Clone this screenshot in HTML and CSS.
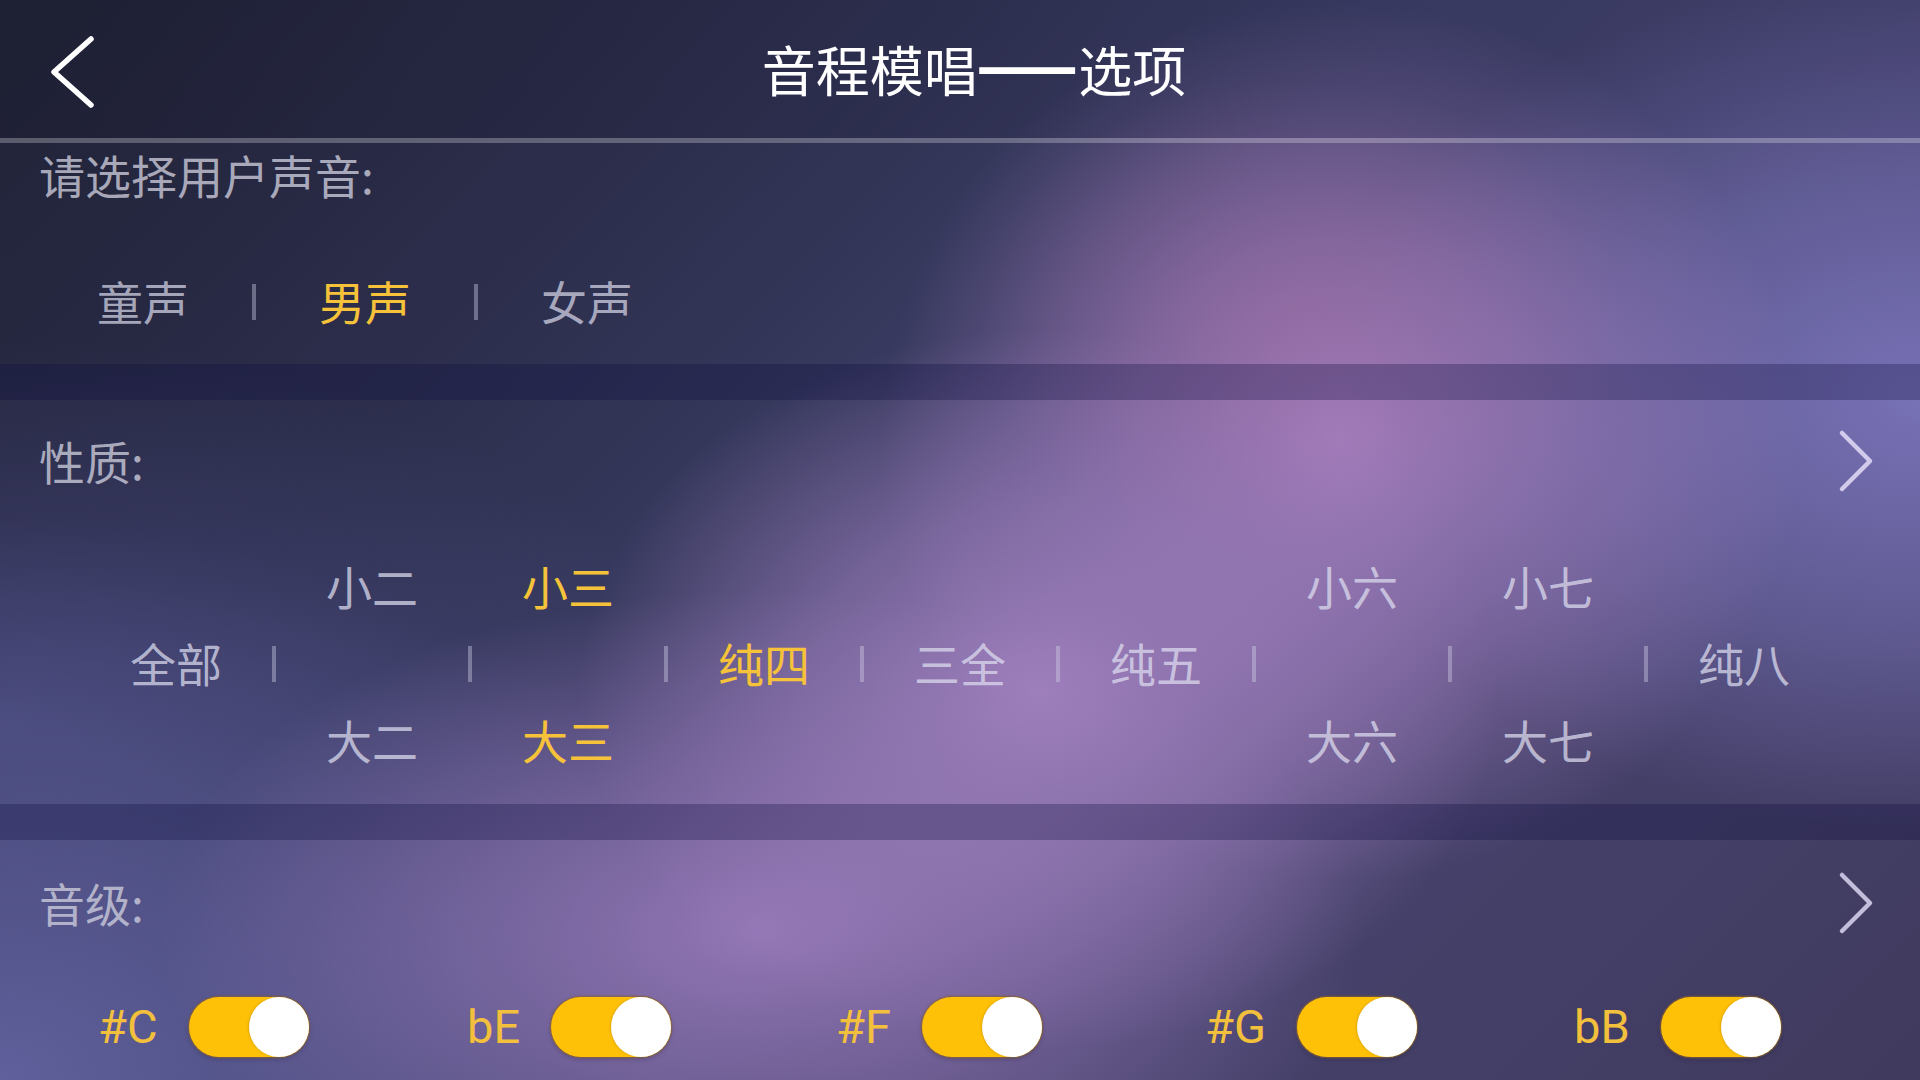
FILE: index.html
```html
<!DOCTYPE html>
<html lang="zh-CN">
<head>
<meta charset="utf-8">
<title>音程模唱——选项</title>
<link rel="stylesheet" href="styles.css">
</head>
<body>
<div class="screen">
  <header class="topbar">
    <div class="back">
      <svg class="back-icon" width="48" height="80" viewBox="0 0 48 80"><path d="M43 10 L6 43 L43 76" fill="none" stroke="#ffffff" stroke-width="5.5" stroke-linecap="round" stroke-linejoin="round"/></svg>
    </div>
    <h1 class="title">音程模唱<span class="dash">——</span>选项</h1>
    <div class="spacer"></div>
  </header>
  <div class="divider"></div>

  <section class="panel panel-voice">
    <div class="label">请选择用户声音:</div>
    <div class="voice-row">
      <span class="voice">童声</span>
      <span class="sep"></span>
      <span class="voice on">男声</span>
      <span class="sep"></span>
      <span class="voice">女声</span>
    </div>
  </section>
  <div class="band"></div>

  <section class="panel panel-interval">
    <div class="head-row">
      <div class="label">性质:</div>
      <svg class="chev" width="40" height="64" viewBox="0 0 40 64"><path d="M6 4 L34 32 L6 60" fill="none" stroke="#d2cbec" stroke-width="4.5" stroke-linecap="round" stroke-linejoin="round"/></svg>
    </div>
    <div class="grid">
      <div class="row row-plain">
        <span class="cell"></span><span class="cell">小二</span><span class="cell on">小三</span><span class="cell"></span><span class="cell"></span><span class="cell"></span><span class="cell">小六</span><span class="cell">小七</span><span class="cell"></span>
      </div>
      <div class="row row-sep">
        <span class="cell">全部</span><span class="sep"></span>
        <span class="cell"></span><span class="sep"></span>
        <span class="cell"></span><span class="sep"></span>
        <span class="cell on">纯四</span><span class="sep"></span>
        <span class="cell">三全</span><span class="sep"></span>
        <span class="cell">纯五</span><span class="sep"></span>
        <span class="cell"></span><span class="sep"></span>
        <span class="cell"></span><span class="sep"></span>
        <span class="cell">纯八</span>
      </div>
      <div class="row row-plain">
        <span class="cell"></span><span class="cell">大二</span><span class="cell on">大三</span><span class="cell"></span><span class="cell"></span><span class="cell"></span><span class="cell">大六</span><span class="cell">大七</span><span class="cell"></span>
      </div>
    </div>
  </section>
  <div class="band"></div>

  <section class="panel panel-keys">
    <div class="head-row">
      <div class="label">音级:</div>
      <svg class="chev" width="40" height="64" viewBox="0 0 40 64"><path d="M6 4 L34 32 L6 60" fill="none" stroke="#c4bedc" stroke-width="4.5" stroke-linecap="round" stroke-linejoin="round"/></svg>
    </div>
    <div class="keys">
      <div class="key"><span class="key-name">#C</span><span class="toggle"><span class="knob"></span></span></div>
      <div class="key"><span class="key-name">bE</span><span class="toggle"><span class="knob"></span></span></div>
      <div class="key"><span class="key-name">#F</span><span class="toggle"><span class="knob"></span></span></div>
      <div class="key"><span class="key-name">#G</span><span class="toggle"><span class="knob"></span></span></div>
      <div class="key"><span class="key-name">bB</span><span class="toggle"><span class="knob"></span></span></div>
    </div>
  </section>
</div>
</body>
</html>
```

FILE: styles.css
```css
html, body {
  margin: 0;
  padding: 0;
}

body {
  width: 1920px;
  height: 1080px;
  overflow: hidden;
  font-family: "Noto Sans CJK SC", "Noto Sans", sans-serif;
  background-color: #34345a;
  background-image:
    radial-gradient(ellipse 320px 240px at 1300px 320px, rgba(170, 108, 160, 0.35), rgba(170, 108, 160, 0) 100%),
    radial-gradient(ellipse 460px 440px at 1340px 440px, rgba(160, 126, 190, 1), rgba(160, 126, 190, 0.6) 45%, rgba(160, 126, 190, 0) 100%),
    radial-gradient(ellipse 460px 360px at 1040px 690px, rgba(162, 130, 192, 0.95), rgba(162, 130, 192, 0.55) 50%, rgba(162, 130, 192, 0) 100%),
    radial-gradient(ellipse 600px 340px at 760px 930px, rgba(152, 122, 186, 0.95), rgba(152, 122, 186, 0.5) 50%, rgba(152, 122, 186, 0) 100%),
    radial-gradient(ellipse 600px 430px at 1920px 400px, rgba(122, 116, 186, 0.95), rgba(122, 116, 186, 0.5) 55%, rgba(122, 116, 186, 0) 100%),
    radial-gradient(ellipse 800px 560px at 0px 1080px, rgba(98, 98, 160, 0.95), rgba(98, 98, 160, 0) 100%),
    radial-gradient(ellipse 700px 380px at 0px 720px, rgba(78, 78, 136, 0.6), rgba(78, 78, 136, 0) 100%),
    linear-gradient(135deg, #202236 0%, #2c2e4c 26%, #3c3e66 48%, #46426c 72%, #403a5e 100%);
}

.screen {
  display: flex;
  flex-direction: column;
  width: 1920px;
  height: 1080px;
}

/* header */
.topbar {
  height: 138px;
  display: grid;
  grid-template-columns: 1fr auto 1fr;
  align-items: center;
  background: linear-gradient(90deg, rgba(22, 22, 40, 0.25), rgba(40, 40, 90, 0.12));
}

.back {
  padding-left: 48px;
  display: flex;
  align-items: center;
}

.back-icon {
  display: block;
}

.title {
  margin: 0 0 0 28px;
  font-size: 54px;
  font-weight: 400;
  color: #ffffff;
  line-height: 1;
  white-space: nowrap;
}

.dash {
  display: inline-block;
  letter-spacing: 6px;
  padding-left: 4px;
  transform-origin: 50% 36px;
  transform: translateY(-5px) scale(1.12, 2);
}

.divider {
  height: 5px;
  background: rgba(255, 255, 255, 0.26);
}

/* panels */
.panel {
  box-sizing: border-box;
  display: flex;
  flex-direction: column;
}

.label {
  font-size: 46px;
  line-height: 60px;
  color: rgba(205, 205, 220, 0.78);
}

.panel-voice {
  height: 221px;
  padding: 1px 0 0 39px;
}

.voice-row {
  display: flex;
  align-items: center;
  margin-top: 73px;
  margin-left: -5px;
  height: 46px;
}

.voice {
  width: 218px;
  text-align: center;
  font-size: 46px;
  line-height: 46px;
  color: rgba(215, 215, 232, 0.72);
}

.voice.on {
  color: #f5c23a;
}

.sep {
  width: 4px;
  height: 36px;
  background: rgba(210, 210, 232, 0.4);
  align-self: center;
}

.voice-row .sep {
  margin-top: 4px;
}

.band {
  height: 36px;
  background: rgba(14, 14, 62, 0.3);
}

.panel-interval {
  height: 404px;
  padding-top: 30px;
}

.head-row {
  display: flex;
  justify-content: space-between;
  align-items: center;
  height: 60px;
  padding: 0 44px 0 39px;
}

.chev {
  display: block;
  margin-top: 2px;
}

.grid {
  margin-top: 57px;
  padding: 0 80px;
  display: flex;
  flex-direction: column;
}

.row {
  display: grid;
  height: 77px;
  align-items: center;
}

.row-plain {
  grid-template-columns: repeat(9, 1fr);
  column-gap: 4px;
}

.row-sep {
  grid-template-columns: repeat(8, 1fr 4px) 1fr;
}

.row-sep .sep {
  margin-top: 3px;
}

.cell {
  text-align: center;
  font-size: 46px;
  line-height: 77px;
  color: rgba(222, 222, 240, 0.74);
}

.cell.on {
  color: #f5c23a;
}

.panel-keys {
  height: 239px;
  padding-top: 32px;
}

.keys {
  margin-top: 65px;
  padding-left: 98px;
  display: grid;
  grid-template-columns: repeat(4, 369px) auto;
  align-items: center;
}

.key {
  display: flex;
  align-items: center;
  gap: 31px;
}

.key-name {
  font-family: Roboto, "Noto Sans", sans-serif;
  font-size: 47px;
  line-height: 60px;
  color: #f2c03c;
}

.toggle {
  width: 120px;
  height: 60px;
  border-radius: 30px;
  background: #ffc107;
  box-shadow: 0 0 0 1.5px rgba(140, 100, 50, 0.55), 0 2px 5px rgba(20, 10, 40, 0.25);
  display: flex;
  justify-content: flex-end;
}

.knob {
  width: 60px;
  height: 60px;
  border-radius: 50%;
  background: #ffffff;
  box-shadow: -1px 0 2px rgba(120, 90, 30, 0.25);
}
```
